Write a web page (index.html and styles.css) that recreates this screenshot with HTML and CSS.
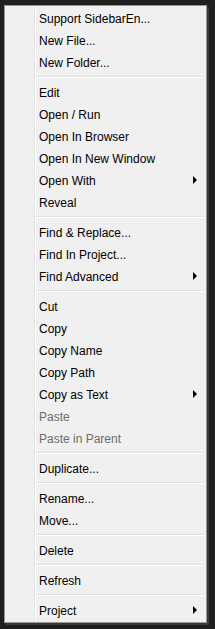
FILE: index.html
```html
<!DOCTYPE html>
<html>
<head>
<meta charset="utf-8">
<link rel="stylesheet" href="styles.css">
</head>
<body>
<div class="menu">
  <div class="item">Support SidebarEn...</div>
  <div class="item">New File...</div>
  <div class="item">New Folder...</div>
  <div class="sep"></div>
  <div class="item">Edit</div>
  <div class="item">Open / Run</div>
  <div class="item">Open In Browser</div>
  <div class="item">Open In New Window</div>
  <div class="item sub">Open With<span class="arrow"></span></div>
  <div class="item">Reveal</div>
  <div class="sep"></div>
  <div class="item">Find &amp; Replace...</div>
  <div class="item">Find In Project...</div>
  <div class="item sub">Find Advanced<span class="arrow"></span></div>
  <div class="sep"></div>
  <div class="item">Cut</div>
  <div class="item">Copy</div>
  <div class="item">Copy Name</div>
  <div class="item">Copy Path</div>
  <div class="item sub">Copy as Text<span class="arrow"></span></div>
  <div class="item disabled">Paste</div>
  <div class="item disabled">Paste in Parent</div>
  <div class="sep"></div>
  <div class="item">Duplicate...</div>
  <div class="sep"></div>
  <div class="item">Rename...</div>
  <div class="item">Move...</div>
  <div class="sep"></div>
  <div class="item">Delete</div>
  <div class="sep"></div>
  <div class="item">Refresh</div>
  <div class="sep"></div>
  <div class="item sub">Project<span class="arrow"></span></div>
</div>
</body>
</html>
```
FILE: styles.css
```css
html, body {
  margin: 0;
  padding: 0;
  background: #1f1f1f;
  width: 215px;
  height: 629px;
  overflow: hidden;
}
body {
  padding: 5px 0 0 4px;
  box-sizing: border-box;
}
.menu {
  width: 203px;
  box-sizing: border-box;
  border: 1px solid #979797;
  background-color: #f0f0f0;
  background-image: linear-gradient(to right, transparent 29px, #e2e3e3 29px, #e2e3e3 30px, #ffffff 30px, #ffffff 31px, transparent 31px);
  padding: 1px 0 1px 0;
  box-shadow: 2px 2px 0 #3a3a3a;
  font-family: "Liberation Sans", Arial, sans-serif;
  font-size: 12px;
  color: #000;
}
.item {
  height: 22px;
  box-sizing: border-box;
  display: flex;
  align-items: center;
  justify-content: space-between;
  padding: 1px 9px 0 34px;
  white-space: nowrap;
}
.item.disabled {
  color: #6d6d6d;
}
.arrow {
  width: 0;
  height: 0;
  margin-top: -1px;
  border-left: 4px solid #000;
  border-top: 4px solid transparent;
  border-bottom: 4px solid transparent;
}
.sep {
  height: 8px;
  display: flex;
  flex-direction: column;
  justify-content: center;
  margin: 0 1px 0 30px;
}
.sep::before {
  content: "";
  display: block;
  height: 1px;
  background: #e2e3e3;
}
.sep::after {
  content: "";
  display: block;
  height: 1px;
  background: #ffffff;
}
```
